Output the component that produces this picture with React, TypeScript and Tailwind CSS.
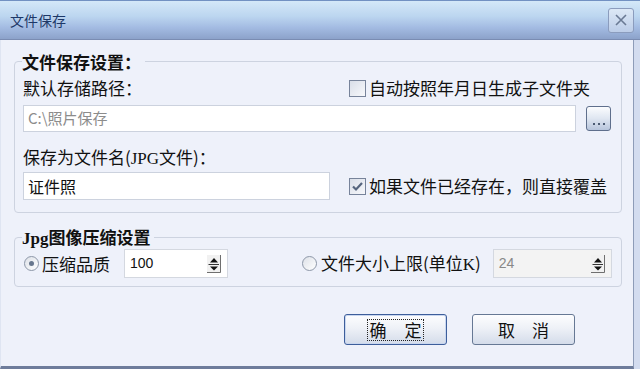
import React from "react";

function CheckBox({ checked }: { checked?: boolean }) {
  return (
    <span className="w-[17px] h-[17px] border border-[#77839a] bg-[linear-gradient(135deg,#d9dee8,#f7f8fb)] flex items-center justify-center">
      {checked && (
        <svg width="13" height="13" viewBox="0 0 13 13">
          <path d="M2 6.5L5 9.5L11 3" stroke="#56657e" strokeWidth="2.2" fill="none" />
        </svg>
      )}
    </span>
  );
}

function Radio({ checked }: { checked?: boolean }) {
  return (
    <span className="w-[15px] h-[15px] rounded-full border border-[#8d97a8] bg-[linear-gradient(135deg,#dde1e8,#ffffff)] flex items-center justify-center">
      {checked && <span className="w-[5px] h-[5px] rounded-full bg-[#67768d]" />}
    </span>
  );
}

function SpinArrows() {
  return (
    <svg width="14" height="18" viewBox="0 0 14 18">
      <rect x="0" y="0" width="14" height="18" fill="#f1f1f1" />
      <path d="M13.5 0V17.5H0" stroke="#6f6f6f" fill="none" />
      <path d="M3 7.5L7 3L11 7.5Z" fill="#111" />
      <path d="M1.5 9.5H12" stroke="#333" />
      <path d="M3 11.5H11L7 15.5Z" fill="#111" />
    </svg>
  );
}

function Spinner({ value, width, disabled }: { value: string; width: string; disabled?: boolean }) {
  return (
    <div
      className={`${width} h-[29px] border border-[#d4d8e0] ${
        disabled ? "bg-[#f3f3f3] text-[#888]" : "bg-white text-[#111]"
      } flex items-center justify-between pl-[5px] pr-[6px]`}
    >
      <span className="text-[14px] font-['Liberation_Sans',sans-serif]">{value}</span>
      <SpinArrows />
    </div>
  );
}

export default function App() {
  return (
    <div className="w-[640px] h-[369px] flex flex-col bg-[#d3dcef] font-['Noto_Sans_CJK_SC',sans-serif] text-[#111]">
      {/* title bar */}
      <div className="h-[40px] border-t border-b border-t-[#7291c2] border-b-[#7a8cb2] flex items-center justify-between pl-[10px] pr-[6px] bg-[linear-gradient(#d4e8f8,#bcd6f0_40%,#a3bbe2_70%,#8ca2ca)]">
        <span className="text-[14px] text-[#1d3868] leading-none">文件保存</span>
        <button className="w-[26px] h-[25px] rounded-[3px] border border-[#8b9cbd] bg-[linear-gradient(#dce8f6,#bccde8)] flex items-center justify-center">
          <svg width="14" height="14" viewBox="0 0 14 14">
            <path d="M2 2L12 12M12 2L2 12" stroke="#6a7a94" strokeWidth="1.6" />
          </svg>
        </button>
      </div>

      {/* body */}
      <div className="flex-1 flex">
        <div className="w-[634px] h-full bg-[#eef1fa] border-l border-r border-b-[3px] border-l-[#dfe5f2] border-r-[#8e9cb8] border-b-[#6e7c9b] flex flex-col">
          {/* group 1 */}
          <div className="relative mt-[21px] ml-[13px] w-[608px] h-[152px] border border-[#cdd3e0] rounded-[4px] px-[8px] pt-[16px]">
            <span className="absolute left-[7px] -top-[10px] bg-[#eef1fa] pr-[4px] text-[17px] font-bold leading-[20px]">
              文件保存设置：
            </span>
            <div className="flex items-center h-[20px]">
              <span className="w-[326px] text-[17px] leading-[20px]">默认存储路径：</span>
              <CheckBox />
              <span className="ml-[3px] text-[17px] leading-[20px]">自动按照年月日生成子文件夹</span>
            </div>
            <div className="mt-[7px] flex items-center h-[27px]">
              <div className="w-[553px] h-[27px] border border-[#ccd2de] bg-white flex items-center pl-[4px] text-[15px] text-[#8c8c8c]">
                {"C:\\照片保存"}
              </div>
              <button className="ml-[10px] w-[25px] h-[25px] rounded-[3px] border border-[#5f6f8c] bg-[linear-gradient(#fbfcfe,#dfe6f1_50%,#b7c5dc)] flex items-end justify-center pb-[5px]">
                <span className="flex gap-[3px]">
                  <span className="w-[2px] h-[2px] bg-[#4b5a72]" />
                  <span className="w-[2px] h-[2px] bg-[#4b5a72]" />
                  <span className="w-[2px] h-[2px] bg-[#4b5a72]" />
                </span>
              </button>
            </div>
            <div className="mt-[15px] h-[20px] text-[17px] leading-[20px]">
              保存为文件名(<span className="font-['Liberation_Serif',serif]">JPG</span>文件)：
            </div>
            <div className="mt-[5px] flex items-center h-[28px]">
              <div className="w-[307px] h-[28px] border border-[#ccd2de] bg-white flex items-center pl-[4px] text-[16px]">
                证件照
              </div>
              <span className="ml-[19px]">
                <CheckBox checked />
              </span>
              <span className="ml-[3px] text-[17px] leading-[20px]">如果文件已经存在，则直接覆盖</span>
            </div>
          </div>

          {/* group 2 */}
          <div className="relative mt-[24px] ml-[13px] w-[608px] h-[50px] border border-[#cdd3e0] rounded-[4px] pl-[9px] pt-[11px]">
            <span className="absolute left-[7px] -top-[11px] bg-[#eef1fa] pr-[4px] text-[17px] font-bold leading-[20px]">
              <span className="font-['Liberation_Serif',serif]">Jpg</span>图像压缩设置
            </span>
            <div className="flex items-center h-[29px]">
              <div className="w-[100px] flex items-center">
                <Radio checked />
                <span className="ml-[3px] text-[17px] leading-[20px]">压缩品质</span>
              </div>
              <Spinner value="100" width="w-[104px]" />
              <div className="ml-[74px] flex items-center">
                <Radio />
                <span className="ml-[4px] text-[17px] leading-[20px]">
                  文件大小上限(单位<span className="font-['Liberation_Serif',serif]">K</span>)
                </span>
              </div>
              <div className="ml-[12px]">
                <Spinner value="24" width="w-[119px]" disabled />
              </div>
            </div>
          </div>

          {/* buttons */}
          <div className="mt-[27px] flex justify-end pr-[58px] gap-[25px]">
            <button className="w-[103px] h-[31px] rounded-[3px] border border-[#3d5e9b] shadow-[inset_0_0_0_1px_#c9d7ef] bg-[linear-gradient(#fdfdfe,#eef1f7_45%,#d4dcea)] flex items-center justify-center">
              <span className="w-[57px] h-[22px] border border-dotted border-[#222] flex items-center justify-center gap-[18px] text-[17px] leading-none">
                <span>确</span>
                <span>定</span>
              </span>
            </button>
            <button className="w-[103px] h-[31px] rounded-[3px] border border-[#667894] bg-[linear-gradient(#fdfdfe,#eef1f7_45%,#d4dcea)] flex items-center justify-center gap-[17px] text-[17px] leading-none">
              <span>取</span>
              <span>消</span>
            </button>
          </div>
        </div>
      </div>
    </div>
  );
}
